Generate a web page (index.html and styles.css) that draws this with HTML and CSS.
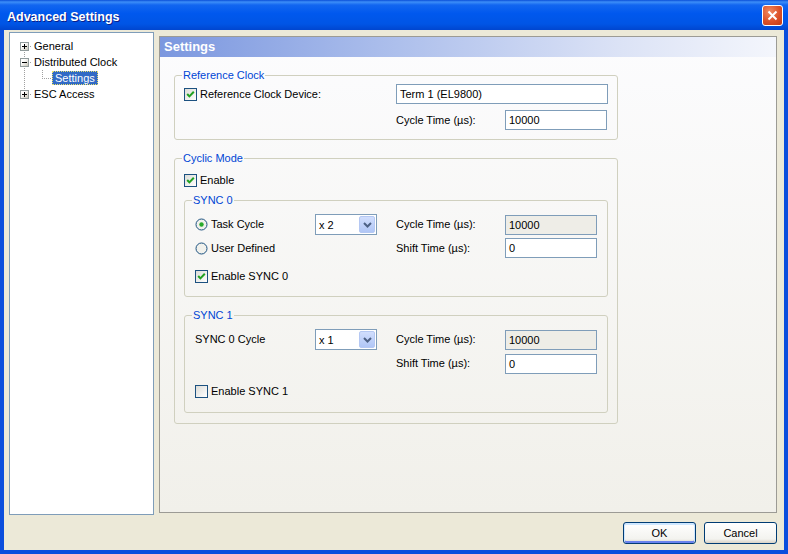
FILE: index.html
```html
<!DOCTYPE html>
<html lang="en">
<head>
    <meta charset="UTF-8"/>
    <title>Advanced Settings</title>
    <link rel="stylesheet" href="styles.css">
</head>
<body>
<div class="window">
    <div class="titlebar">
        <span class="title">Advanced Settings</span>
        <span class="close_btn">
            <svg width="13" height="13" viewBox="0 0 13 13"><path d="M2.5 2.5 L10.5 10.5 M10.5 2.5 L2.5 10.5"/></svg>
        </span>
    </div>

    <div class="client">
        <div class="main">

            <!-- tree on the left -->
            <div class="tree">
                <div class="node">
                    <span class="guide first"><span class="exp"><svg width="9" height="9" viewBox="0 0 9 9"><path d="M2 4.5 H7 M4.5 2 V7"/></svg></span></span>
                    <span class="text">General</span>
                </div>
                <div class="node">
                    <span class="guide"><span class="exp"><svg width="9" height="9" viewBox="0 0 9 9"><path d="M2 4.5 H7"/></svg></span></span>
                    <span class="text">Distributed Clock</span>
                </div>
                <div class="node">
                    <span class="guide pass"></span>
                    <span class="guide_child"></span>
                    <span class="text selected">Settings</span>
                </div>
                <div class="node">
                    <span class="guide last"><span class="exp"><svg width="9" height="9" viewBox="0 0 9 9"><path d="M2 4.5 H7 M4.5 2 V7"/></svg></span></span>
                    <span class="text">ESC Access</span>
                </div>
            </div>

            <!-- settings page -->
            <div class="page">
                <div class="page_head">Settings</div>

                <fieldset class="group group_top">
                    <legend>Reference Clock</legend>
                    <div class="ref_grid">
                        <label class="check">
                            <span class="box"><svg width="11" height="11" viewBox="0 0 11 11"><path d="M2.2 5 L4.4 7.4 L8.8 2.8"/></svg></span>
                            Reference Clock Device:
                        </label>
                        <div class="edit edit_wide">Term 1 (EL9800)</div>
                        <span class="lbl col_label">Cycle Time (µs):</span>
                        <div class="edit col_edit">10000</div>
                    </div>
                </fieldset>

                <fieldset class="group group_cyclic">
                    <legend>Cyclic Mode</legend>
                    <label class="check">
                        <span class="box"><svg width="11" height="11" viewBox="0 0 11 11"><path d="M2.2 5 L4.4 7.4 L8.8 2.8"/></svg></span>
                        Enable
                    </label>

                    <fieldset class="group sub">
                        <legend>SYNC 0</legend>
                        <div class="sync_grid">
                            <label class="check">
                                <svg class="radio" width="13" height="13" viewBox="0 0 13 13"><circle cx="6.5" cy="6.5" r="5.5" class="ring"/><circle cx="6.5" cy="6.5" r="2.2" class="dot"/></svg>
                                Task Cycle
                            </label>
                            <div class="combo"><span>x 2</span><span class="drop"><svg width="9" height="6" viewBox="0 0 9 6"><path d="M1 1 L4.5 4.5 L8 1"/></svg></span></div>
                            <span class="lbl col_label">Cycle Time (µs):</span>
                            <div class="edit ro">10000</div>

                            <label class="check">
                                <svg class="radio" width="13" height="13" viewBox="0 0 13 13"><circle cx="6.5" cy="6.5" r="5.5" class="ring"/></svg>
                                User Defined
                            </label>
                            <span class="lbl col_label">Shift Time (µs):</span>
                            <div class="edit">0</div>

                            <label class="check row_last">
                                <span class="box"><svg width="11" height="11" viewBox="0 0 11 11"><path d="M2.2 5 L4.4 7.4 L8.8 2.8"/></svg></span>
                                Enable SYNC 0
                            </label>
                        </div>
                    </fieldset>

                    <fieldset class="group sub sub_second">
                        <legend>SYNC 1</legend>
                        <div class="sync_grid">
                            <span class="lbl">SYNC 0 Cycle</span>
                            <div class="combo"><span>x 1</span><span class="drop"><svg width="9" height="6" viewBox="0 0 9 6"><path d="M1 1 L4.5 4.5 L8 1"/></svg></span></div>
                            <span class="lbl col_label">Cycle Time (µs):</span>
                            <div class="edit ro">10000</div>

                            <span class="lbl col_label">Shift Time (µs):</span>
                            <div class="edit">0</div>

                            <label class="check row_last">
                                <span class="box"></span>
                                Enable SYNC 1
                            </label>
                        </div>
                    </fieldset>
                </fieldset>
            </div>
        </div>

        <div class="buttons">
            <button class="btn default">OK</button>
            <button class="btn">Cancel</button>
        </div>
    </div>
</div>
</body>
</html>
```

FILE: styles.css
```css
body {
    margin: 0;
    font-family: "Liberation Sans", Arial, sans-serif;
    font-size: 11px;
    color: #000;
}

.window {
    width: 788px;
    height: 554px;
    display: flex;
    flex-direction: column;
    background: #ECE9D8;
}

/* title bar */
.titlebar {
    height: 30px;
    flex: none;
    display: flex;
    align-items: center;
    padding: 0 5px 0 7px;
    background: linear-gradient(#0A4FD8 0, #3D8EF8 2px, #1266F0 5px, #0058EE 45%, #0055E5 80%, #0046CF 100%);
}
.title {
    color: #fff;
    font-weight: bold;
    font-size: 12.5px;
    text-shadow: 1px 1px #0A1E8A;
    padding-top: 3px;
}
.close_btn {
    margin-left: auto;
    width: 21px;
    height: 21px;
    box-sizing: border-box;
    border: 1px solid #fff;
    border-radius: 3px;
    background: radial-gradient(circle at 35% 30%, #F08A62, #DC5128 55%, #C23A14);
    display: flex;
    align-items: center;
    justify-content: center;
}
.close_btn path {
    stroke: #fff;
    stroke-width: 2;
    fill: none;
}

/* client area */
.client {
    flex: 1;
    display: flex;
    flex-direction: column;
    border: 4px solid #0B4EDD;
    border-top: 0;
    padding: 2px 7px 6px 5px;
}
.main {
    display: flex;
    align-items: flex-start;
}

/* tree */
.tree {
    width: 145px;
    height: 483px;
    box-sizing: border-box;
    border: 1px solid #7F9DB9;
    background: #fff;
    padding-top: 5px;
}
.node {
    display: flex;
    align-items: center;
    height: 16px;
}
.guide {
    flex: none;
    width: 22px;
    height: 16px;
    background:
        repeating-linear-gradient(to bottom, #A0A0A0 0 1px, transparent 1px 2px) 14px 0 / 1px 16px no-repeat,
        repeating-linear-gradient(to right, #A0A0A0 0 1px, transparent 1px 2px) 14px 8px / 8px 1px no-repeat;
}
.guide.first {
    background:
        repeating-linear-gradient(to bottom, #A0A0A0 0 1px, transparent 1px 2px) 14px 8px / 1px 8px no-repeat,
        repeating-linear-gradient(to right, #A0A0A0 0 1px, transparent 1px 2px) 14px 8px / 8px 1px no-repeat;
}
.guide.pass {
    background:
        repeating-linear-gradient(to bottom, #A0A0A0 0 1px, transparent 1px 2px) 14px 0 / 1px 16px no-repeat;
}
.guide.last {
    background:
        repeating-linear-gradient(to bottom, #A0A0A0 0 1px, transparent 1px 2px) 14px 0 / 1px 8px no-repeat,
        repeating-linear-gradient(to right, #A0A0A0 0 1px, transparent 1px 2px) 14px 8px / 8px 1px no-repeat;
}
.guide_child {
    flex: none;
    width: 20px;
    height: 16px;
    background:
        repeating-linear-gradient(to bottom, #A0A0A0 0 1px, transparent 1px 2px) 10px 0 / 1px 8px no-repeat,
        repeating-linear-gradient(to right, #A0A0A0 0 1px, transparent 1px 2px) 10px 8px / 10px 1px no-repeat;
}
.exp {
    display: block;
    width: 9px;
    height: 9px;
    box-sizing: border-box;
    margin: 4px 0 0 10px;
    border: 1px solid #919B9C;
    background: linear-gradient(135deg, #fff 30%, #C8C5B8);
}
.exp svg {
    display: block;
    margin: -1px;
}
.exp path {
    stroke: #000;
    stroke-width: 1;
    fill: none;
    shape-rendering: crispEdges;
}
.text {
    padding: 0 2px;
    line-height: 14px;
    white-space: nowrap;
}
.text.selected {
    padding: 0 2px;
    line-height: 12px;
    background: #316AC5;
    color: #fff;
    border: 1px dotted #E8E070;
}

/* right page */
.page {
    margin: 4px 0 0 5px;
    width: 618px;
    height: 477px;
    box-sizing: border-box;
    border: 1px solid #9C9B95;
    background: linear-gradient(#FCFCFE, #F1F0EA);
}
.page_head {
    height: 20px;
    line-height: 20px;
    padding-left: 4px;
    font-size: 13px;
    font-weight: bold;
    color: #fff;
    background: linear-gradient(to right, #7B97DF, #A9BCEB 35%, #DCE3F6 75%, #F4F6FC);
}

/* group boxes */
.group {
    margin: 0;
    padding: 2px 9px 9px 9px;
    border: 1px solid #D0D0BF;
    border-radius: 3px;
    min-inline-size: 0;
    box-sizing: border-box;
}
.group legend {
    color: #0046D5;
    padding: 0 1px;
    margin-left: -2px;
    line-height: 13px;
}
.group_top {
    margin: 12px 0 0 14px;
    width: 444px;
}
.group_cyclic {
    margin: 12px 0 0 14px;
    width: 444px;
    padding: 9px 9px 10px 9px;
}
.sub {
    margin-top: 7px;
    padding: 7px 9px 13px 10px;
}
.sub legend {
    margin-left: -3px;
}
.sub_second {
    margin-top: 12px;
    padding-bottom: 14px;
}

.ref_grid {
    display: grid;
    grid-template-columns: 212px 109px 102px;
    grid-template-rows: 20px 20px;
    row-gap: 6px;
    align-items: center;
}
.ref_grid .edit_wide {
    grid-column: 2 / 4;
    width: 212px;
}
.ref_grid .col_label {
    grid-column: 2;
}
.ref_grid .col_edit {
    grid-column: 3;
}

.sync_grid {
    display: grid;
    grid-template-columns: 120px 62px 19px 109px 92px;
    grid-template-rows: 21px 20px 22px;
    row-gap: 3px;
    align-items: center;
}
.sub_second .sync_grid {
    grid-template-rows: 21px 21px 21px;
}
.sync_grid .combo {
    grid-column: 2;
}
.sync_grid .col_label {
    grid-column: 4;
}
.sync_grid .edit {
    grid-column: 5;
}
.sync_grid .check:not(.row_last) {
    grid-column: 1;
}
.sync_grid .row_last {
    grid-column: 1 / 4;
    align-self: end;
}

/* controls */
.lbl {
    line-height: 13px;
    white-space: nowrap;
}
.check {
    display: flex;
    align-items: center;
    gap: 3px;
    line-height: 13px;
    white-space: nowrap;
}
.box {
    flex: none;
    width: 13px;
    height: 13px;
    box-sizing: border-box;
    border: 1px solid #1C5180;
    background: linear-gradient(135deg, #DCDCD7, #fff);
}
.box svg {
    display: block;
}
.box path {
    stroke: #21A121;
    stroke-width: 2;
    fill: none;
}
.radio {
    flex: none;
    display: block;
}
.radio .ring {
    fill: #F1F1EC;
    stroke: #1C5180;
}
.radio .dot {
    fill: #2AAA2A;
}
.edit {
    height: 20px;
    box-sizing: border-box;
    border: 1px solid #7F9DB9;
    background: #fff;
    padding-left: 3px;
    display: flex;
    align-items: center;
}
.edit.ro {
    background: #EEEDE7;
}
.combo {
    width: 62px;
    height: 21px;
    box-sizing: border-box;
    border: 1px solid #7F9DB9;
    background: #fff;
    padding: 0 1px 0 3px;
    display: flex;
    align-items: center;
    justify-content: space-between;
}
.drop {
    width: 16px;
    height: 17px;
    box-sizing: border-box;
    border: 1px solid #B5C8F3;
    border-radius: 2px;
    background: linear-gradient(#D1DEFD, #B0C6F6);
    display: flex;
    align-items: center;
    justify-content: center;
}
.drop svg {
    display: block;
}
.drop path {
    stroke: #4D6185;
    stroke-width: 2;
    fill: none;
}

/* dialog buttons */
.buttons {
    display: flex;
    justify-content: flex-end;
    gap: 8px;
    margin-top: 7px;
}
.btn {
    width: 73px;
    height: 22px;
    box-sizing: border-box;
    border: 1px solid #003C74;
    border-radius: 3px;
    background: linear-gradient(#FFFFFF, #F3F3EF 80%, #D8D2C6);
    font-family: "Liberation Sans", Arial, sans-serif;
    font-size: 11px;
    color: #000;
    padding: 0;
}
.btn.default {
    box-shadow: inset 0 1px 0 1px #CEE7FF, inset 0 -1px 0 1px #6982EE;
}
```
